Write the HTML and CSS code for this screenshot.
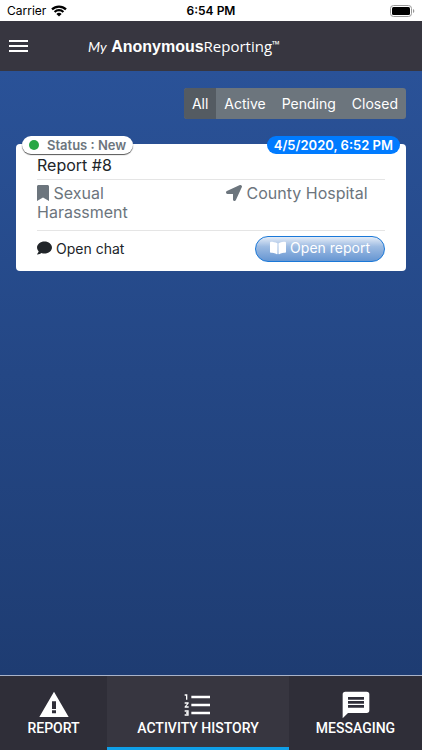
FILE: index.html
```html
<!DOCTYPE html>
<html lang="en">
<head>
  <meta charset="UTF-8">
  <meta name="viewport" content="width=device-width, initial-scale=1.0">
  <title>My Anonymous Reporting - Activity History</title>
  <link rel="stylesheet" href="styles.css">
</head>
<body>
<div class="status-bar">
  <div class="carrier">
    <span>Carrier</span>
    <svg width="16" height="12" viewBox="0 0 16 12" fill="none" stroke="#000" stroke-width="2.2">
      <path d="M1 4.4a10 10 0 0 1 14 0M3.6 7a6.3 6.3 0 0 1 8.800 0"/>
      <path d="M8 11.600 5.400 9a3.800 3.800 0 0 1 5.200 0z" fill="#000" stroke="none"/>
    </svg>
  </div>
  <div class="time">6:54 PM</div>
  <div class="battery">
    <svg width="25" height="12" viewBox="0 0 25 12">
      <rect x="0.5" y="0.5" width="21" height="11" rx="3" fill="none" stroke="#999"/>
      <rect x="2" y="2" width="18" height="8" rx="1.5"/>
      <path d="M23 4v4c1.800-.6 1.800-3.400 0-4z" fill="#999"/>
    </svg>
  </div>
</div>

<header class="header">
  <button class="menu-btn" aria-label="Menu">
    <svg width="20" height="14" viewBox="0 0 20 14" fill="#fff">
      <path d="M0 0h19v2H0zM0 5h19v2H0zM0 10h19v2H0z"/>
    </svg>
  </button>
  <h1 class="logo"><span class="logo-my">My</span> <span class="logo-bold">Anonymous</span><span class="logo-light">Reporting</span><span class="logo-tm">™</span></h1>
</header>

<main class="content">
  <div class="filters">
    <button class="filter active">All</button>
    <button class="filter">Active</button>
    <button class="filter">Pending</button>
    <button class="filter">Closed</button>
  </div>

  <article class="card">
    <div class="badge status-badge"><span class="dot"></span>Status : New</div>
    <div class="badge date-badge">4/5/2020, 6:52 PM</div>
    <h2 class="card-title">Report #8</h2>
    <div class="details">
      <div class="detail">
        <svg width="12" height="16" viewBox="0 0 384 512" fill="currentColor"><path d="M0 512V48C0 21.500 21.500 0 48 0h288c26.500 0 48 21.500 48 48v464L192 400 0 512z"/></svg>
        Sexual Harassment
      </div>
      <div class="detail">
        <svg width="16" height="16" viewBox="0 0 512 512" fill="currentColor"><path d="M444.500 3.500L28.700 195.400c-48 22.400-32 92.800 19.200 92.800h175.900v175.900c0 51.200 70.400 67.200 92.800 19.200L508.500 67.500c16-38.400-25.600-80-64-64z"/></svg>
        County Hospital
      </div>
    </div>
    <div class="card-actions">
      <button class="chat-btn">
        <svg width="15" height="14" viewBox="0 0 512 480" fill="currentColor"><path d="M256 16C114.600 16 0 109.100 0 224c0 49.600 21.400 95 57 130.700C44.500 405.100 2.700 450 2.200 450.500c-2.200 2.300-2.800 5.700-1.500 8.700S4.800 464 8 464c66.300 0 116-31.800 140.600-51.400 32.700 12.300 69 19.400 107.400 19.400 141.400 0 256-93.100 256-208S397.400 16 256 16z"/></svg>
        Open chat
      </button>
      <button class="report-btn">
        <svg width="16" height="14" viewBox="0 0 576 448" fill="currentColor"><path d="M542.200 0c-54.700 3.200-163.400 14.400-230.500 55.600-4.600 2.800-7.200 7.900-7.200 13.200v363.900c0 11.500 12.600 18.900 23.300 13.500 69-34.700 168.800-44.200 218.100-46.800 16.900-.9 30-14.500 30-30.700V30.700c0-17.700-15.300-31.700-33.700-30.700zM264.700 55.600C197.600 14.500 88.900 3.300 34.200.1 15.800-1 0 13 0 30.700v338c0 16.200 13.200 29.800 30 30.700 49.300 2.600 149.100 12.100 218.200 46.800 10.600 5.400 23.200-2.100 23.200-13.500V68.600c0-5.300-2.100-10.200-6.700-13z"/></svg>
        Open report
      </button>
    </div>
  </article>
</main>

<nav class="tabs">
  <a class="tab" href="#report">
    <svg width="32" height="32" viewBox="0 0 24 24" fill="currentColor"><path d="M1 21h22L12 2 1 21zm12.500-2.800h-3v-2.200h3v2.200zm0-3.200h-3V9.200h3V15z"/></svg>
    REPORT
  </a>
  <a class="tab active" href="#history">
    <svg width="32" height="32" viewBox="0 0 24 24" fill="currentColor"><path d="M2 17h2v.5H3v1h1v.5H2v1h3v-4H2v1zm1-9h1V4H2v1h1v3zm-1 3h1.800L2 13.100v.9h3v-1H3.200L5 10.900V10H2v1zm5-6v2h14V5H7zm0 14h14v-2H7v2zm0-6h14v-2H7v2z"/></svg>
    ACTIVITY HISTORY
  </a>
  <a class="tab" href="#messaging">
    <svg width="32" height="32" viewBox="0 0 24 24" fill="currentColor"><path d="M4 2h16a2 2 0 0 1 2 2v12a2 2 0 0 1-2 2H6l-4 4V4a2 2 0 0 1 2-2zm2 10v2h12v-2H6zm0-3v2h12V9H6zm0-3v2h12V6H6z"/></svg>
    MESSAGING
  </a>
</nav>
</body>
</html>
```

FILE: styles.css
```css
* {
  box-sizing: border-box;
}
body {
  margin: 0;
  min-height: 100vh;
  display: flex;
  flex-direction: column;
  font-family: Inter, sans-serif;
  background-color: #fff;
}
button {
  border: none;
  background: none;
  padding: 0;
  font-family: inherit;
  cursor: pointer;
}
.status-bar {
  display: grid;
  grid-template-columns: 1fr auto 1fr;
  align-items: center;
  height: 21px;
  padding: 0 7px;
  font-size: 12px;
}
.carrier {
  display: flex;
  align-items: center;
  gap: 5px;
}
.time {
  font-weight: 600;
}
.battery {
  display: flex;
  justify-content: flex-end;
}
.header {
  display: grid;
  grid-template-columns: 80px 1fr;
  align-items: center;
  height: 50px;
  padding: 0 8px;
  background-color: #373640;
  color: #fff;
}
.menu-btn {
  display: flex;
  padding: 2px 1px 0;
}
.logo {
  margin: 0;
  font-size: 16px;
  line-height: 20px;
  font-weight: 400;
  white-space: nowrap;
}
.logo-my {
  font-family: Lato, sans-serif;
  font-size: 14px;
  font-style: italic;
}
.logo-bold {
  font-family: "Liberation Sans", Arial, sans-serif;
  font-size: 16px;
  font-weight: 700;
}
.logo-light {
  font-family: "Open Sans", sans-serif;
  font-size: 15px;
}
.logo-tm {
  font-family: "Noto Sans", sans-serif;
  font-size: 10px;
  line-height: 10px;
  font-weight: 700;
  vertical-align: 4px;
}
.content {
  flex: 1;
  padding: 17px 16px;
  background: linear-gradient(#2a5298, #1e3c72);
}
.filters {
  display: flex;
  width: fit-content;
  margin-left: auto;
  border-radius: 3px;
  overflow: hidden;
  background-color: #6c757d;
}
.filter {
  padding: 0 8px;
  font-size: 14px;
  line-height: 31px;
  color: #fff;
}
.filter.active {
  background-color: #545b62;
}
.card {
  position: relative;
  margin-top: 25px;
  padding: 10px 21px 9px;
  border-radius: 4px;
  background-color: #fff;
  color: #212529;
}
.badge {
  position: absolute;
  top: -8px;
  height: 18px;
  border-radius: 9px;
  font-size: 13px;
  line-height: 18px;
  font-weight: 600;
}
.status-badge {
  left: 6px;
  display: flex;
  align-items: center;
  gap: 8px;
  padding: 0 7px;
  background-color: #fff;
  color: #6c757d;
  box-shadow: 0 1px 1px #555;
}
.dot {
  width: 10px;
  height: 10px;
  border-radius: 50%;
  background-color: #28a745;
}
.date-badge {
  right: 6px;
  padding: 0 7px;
  background-color: #007bff;
  color: #fff;
}
.card-title {
  margin: 0;
  padding-bottom: 3px;
  border-bottom: 1px solid #e5e5e5;
  font-size: 16px;
  line-height: 22px;
  font-weight: 400;
}
.details {
  display: grid;
  grid-template-columns: 1fr 1fr;
  gap: 30px;
  padding: 4px 0 8px;
  border-bottom: 1px solid #e5e5e5;
  color: #6c757d;
  font-size: 16px;
  line-height: 19px;
}
.detail svg {
  vertical-align: -2px;
}
.card-actions {
  display: flex;
  justify-content: space-between;
  align-items: center;
  padding-top: 5px;
}
.chat-btn,
.report-btn {
  display: flex;
  align-items: center;
  gap: 4px;
  height: 26px;
  padding-bottom: 2px;
  font-size: 14px;
  color: #212529;
}
.report-btn {
  padding: 0 14px 3px;
  border: 1px solid #1a78d8;
  border-radius: 13px;
  background: linear-gradient(#e4ecf7, #9dbbe2 40%, #6696d2);
  color: #fff;
}
.tabs {
  display: grid;
  grid-template-columns: 107fr 182fr 133fr;
  height: 75px;
  border-top: 1px solid #a9b3c9;
  background-color: #2f2e38;
}
.tab {
  display: flex;
  flex-direction: column;
  align-items: center;
  padding-top: 13px;
  border-bottom: 3px solid transparent;
  font-family: Roboto, sans-serif;
  font-size: 14px;
  line-height: 14px;
  font-weight: 500;
  color: #fff;
  text-decoration: none;
}
.tab.active {
  border-bottom-color: #0f9fe8;
  background-color: #373640;
}
```
